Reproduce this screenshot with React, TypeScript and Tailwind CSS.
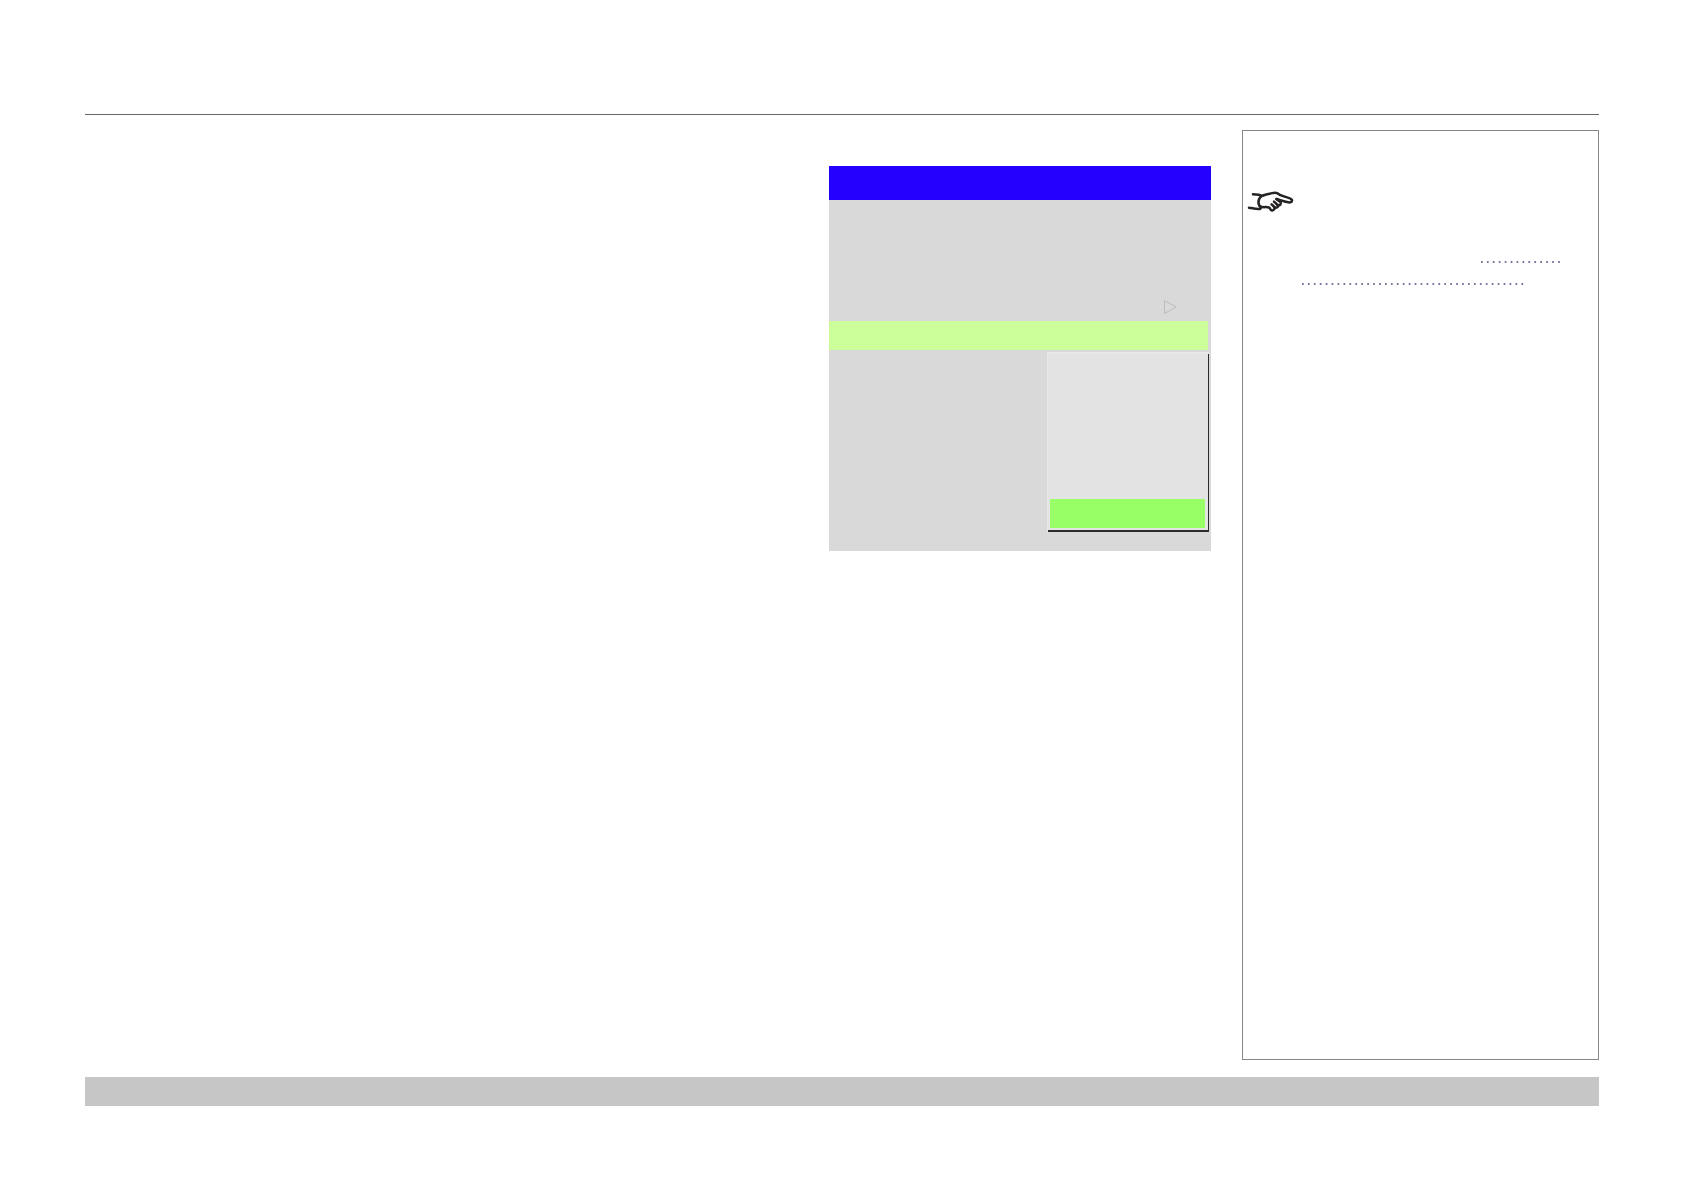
function PointingHand() {
  return (
    <svg
      className="h-[30px] w-[52px]"
      viewBox="0 0 156 90"
      fill="none"
      stroke="#262324"
      strokeWidth="7.5"
      strokeLinecap="round"
      strokeLinejoin="round"
      aria-hidden="true"
    >
      {/* Cuff */}
      <path d="M24 25 C32 26 40 24 47 28 C51 30 46 33 43 38 C39 46 40 54 43 59 C47 62 50 66 45 69 C34 70 23 67 12 65" />
      {/* Back of the hand and index finger */}
      <path d="M49 30 C58 28 63 24 74 23 C83 22 90 17 97 22 C103 27 110 29 119 32 C127 35 138 36 141 42 C142 50 133 50 126 48 C115 45 104 43 95 39" />
      {/* Thumb and curled fingers */}
      <path d="M45 61 C55 66 64 61 73 65 C76 68 77 75 83 73 C89 71 91 66 88 63 L80 55" />
      <path d="M88 65 C96 67 102 61 98 57 L87 47" />
      <path d="M98 58 C106 59 110 53 106 48 L94 39" />
    </svg>
  );
}

function DottedLine({ width }: { width: number }) {
  return (
    <svg className="block h-0.5" style={{ width }} aria-hidden="true">
      <line x1="0" y1="1" x2={width} y2="1" stroke="#76749c" strokeWidth="2" strokeDasharray="1.7 4.23" />
    </svg>
  );
}

function MenuPanel() {
  return (
    <section className="mt-9 h-[385px] w-[382px] shrink-0 bg-[#d9d9d9]" aria-label="Menu">
      <header className="h-[34px] bg-[#2600ff]" />
      <div className="flex h-[121px] items-end justify-end pr-[33px] pb-1.5">
        <svg className="h-4 w-[15px]" viewBox="0 0 15 16" fill="none" stroke="#bcbcbc" aria-hidden="true">
          <path d="M1.5 1.5 L13 8 L1.5 14.5 Z" />
        </svg>
      </div>

      {/* Selected row */}
      <div className="mr-[3px] h-[29px] bg-[#ccff99]" />

      {/* Drop-down list */}
      <div className="mt-0.5 mr-0.5 ml-auto w-[162px] border-t-2 border-l border-[#e8e8e8] bg-[#2b2b2b] pr-px pb-0.5">
        <div className="flex h-44 flex-col justify-end bg-[#e3e3e3] pr-[3px] pb-0.5 pl-0.5">
          <div className="h-[29px] bg-[#99ff66]" />
        </div>
      </div>
    </section>
  );
}

export default function App() {
  return (
    <div className="min-h-screen bg-white px-[85px] pt-[114px] pb-[85px] font-['Liberation_Sans',Arial,sans-serif]">
      <hr className="border-t border-[#666666]" />

      <main className="mt-[15px] flex min-h-[930px] justify-end gap-[31px]">
        <MenuPanel />

        {/* Notes */}
        <aside className="w-[357px] shrink-0 border border-[#878787] pt-[55px] pl-[2px]">
          <PointingHand />
          <div className="mt-[45px] flex flex-col gap-5 pr-[37px] pl-[57px]">
            <div className="flex justify-end">
              <DottedLine width={80} />
            </div>
            <DottedLine width={222} />
          </div>
        </aside>
      </main>

      <footer className="mt-[17px] h-[29px] bg-[#c6c6c6]" />
    </div>
  );
}
